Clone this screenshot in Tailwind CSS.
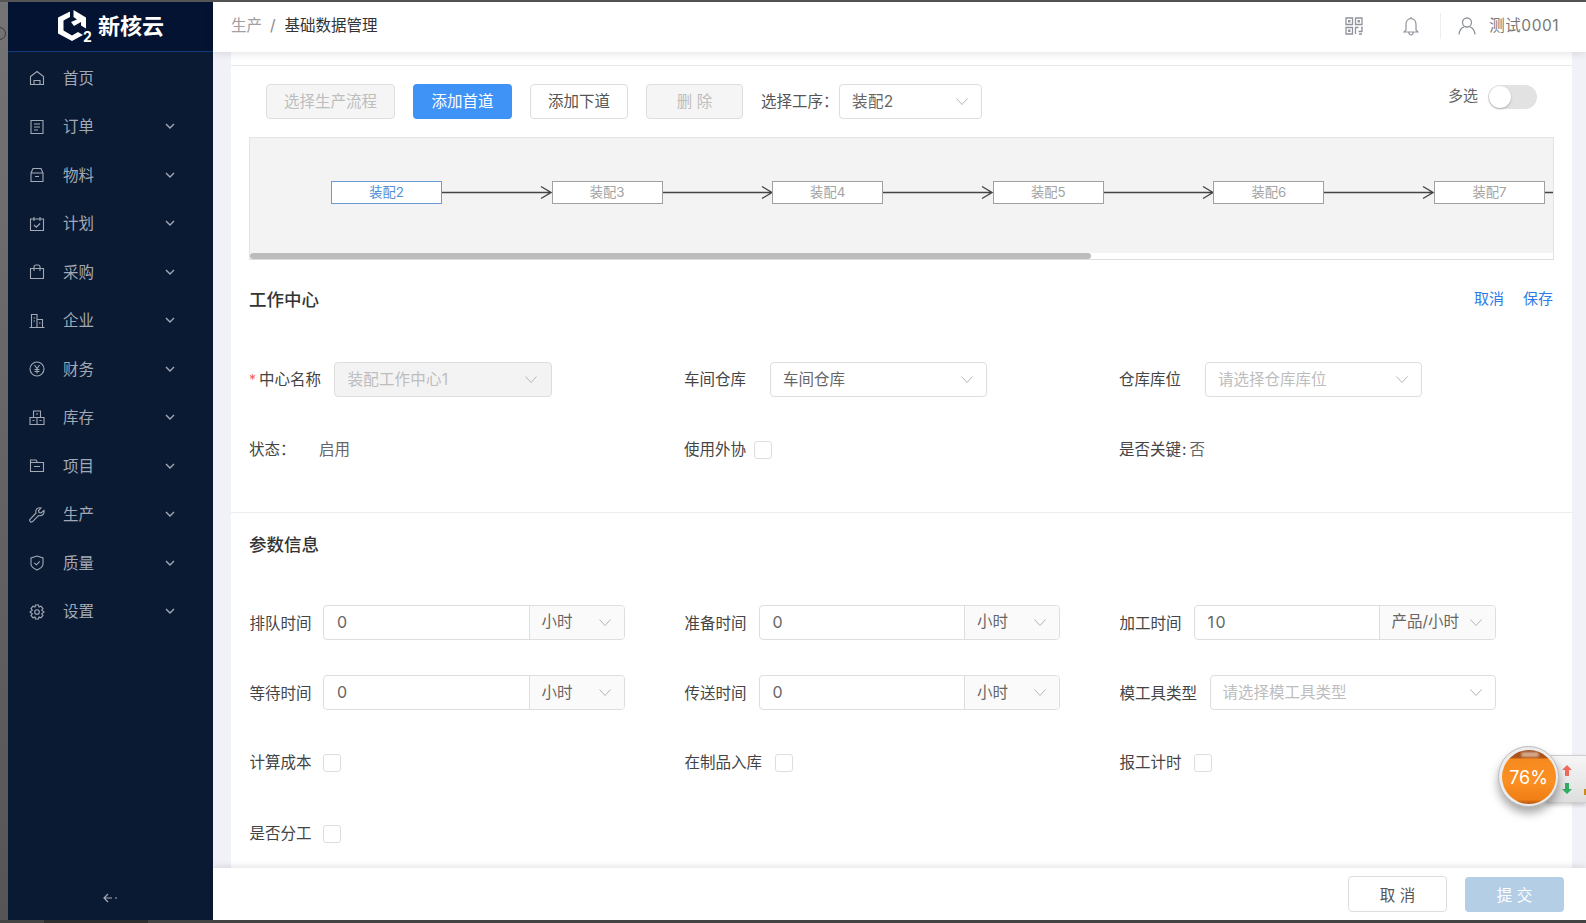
<!DOCTYPE html>
<html lang="zh-CN">
<head>
    <meta charset="UTF-8">
    <meta name="viewport" content="width=device-width, initial-scale=1.0">
    <title>基础数据管理</title>
    <script src="https://cdn.jsdelivr.net/npm/@tailwindcss/browser@4"></script>
</head>
<body class="w-[1586px] h-[923px] overflow-hidden relative bg-[#444] font-['Inter','Noto_Sans_CJK_SC',sans-serif] text-[15.5px] text-[#555]">
    <div class="h-[2px] bg-[#555]"></div>
    <div class="flex h-[918px]">
        <div class="w-[8px] bg-linear-to-b from-[#747474] to-[#555555] relative overflow-hidden">
            <div class="absolute -left-[7px] top-[25px] w-[13px] h-[13px] rounded-full border border-[#3c3c3c]"></div>
        </div>

        <!-- Sidebar -->
        <aside class="w-[205px] bg-[#0a1a33] flex flex-col text-[#a3a9b4]">
            <div class="h-[50px] bg-[#031331] border-b border-[#123a7c] flex items-center pl-[49px] shrink-0">
                <svg class="w-[30px] h-[31px] -mt-[3px]" viewBox="0 0 30 31" fill="#fff">
                    <path d="M13 1.5 V7 L6.5 10.5 V20.5 L15 25.5 L21 22 L26 25 L15 31 L1 23.5 V7.5 Z"/>
                    <path d="M16.5 0 L29 7.5 V18.5 L24 15.5 V12 L17 16 L14 12 L20 9.5 L16.5 7 Z"/>
                </svg>
                <span class="text-white font-bold text-[14px] -ml-[4px] mt-[21px] w-[10px] leading-none">2</span>
                <span class="text-white font-bold text-[22px] ml-[5px] -mt-[2px] leading-none">新核云</span>
            </div>
            <nav class="pt-[2px]">
                <div class="h-[48.5px] flex items-center pl-[21px]">
                    <svg class="w-[16px] h-[16px]" viewBox="0 0 16 16" fill="none" stroke="#a3a9b4" stroke-width="1.1"><path d="M1.5 6.5 L8 1.5 L14.5 6.5 V14.5 H1.5 Z"/><path d="M5 14.5 V10.5 H11 V14.5"/></svg>
                    <span class="ml-[18px]">首页</span>
                </div>
                <div class="h-[48.5px] flex items-center pl-[21px]">
                    <svg class="w-[16px] h-[16px]" viewBox="0 0 16 16" fill="none" stroke="#a3a9b4" stroke-width="1.1"><path d="M2 1.5 H14 V14.5 H2 Z M5 5 H11 M5 8 H11 M5 11 H9"/></svg>
                    <span class="ml-[18px]">订单</span>
                    <svg class="w-[10px] h-[7px] ml-[71px]" viewBox="0 0 10 7" fill="none" stroke="#a3a9b4" stroke-width="1.4"><path d="M1 1 L5 5 L9 1"/></svg>
                </div>
                <div class="h-[48.5px] flex items-center pl-[21px]">
                    <svg class="w-[16px] h-[16px]" viewBox="0 0 16 16" fill="none" stroke="#a3a9b4" stroke-width="1.1"><path d="M2 6 L4 1.5 H12 L14 6 V14.5 H2 Z M2 6 H14 M6 9.5 H10"/></svg>
                    <span class="ml-[18px]">物料</span>
                    <svg class="w-[10px] h-[7px] ml-[71px]" viewBox="0 0 10 7" fill="none" stroke="#a3a9b4" stroke-width="1.4"><path d="M1 1 L5 5 L9 1"/></svg>
                </div>
                <div class="h-[48.5px] flex items-center pl-[21px]">
                    <svg class="w-[16px] h-[16px]" viewBox="0 0 16 16" fill="none" stroke="#a3a9b4" stroke-width="1.1"><path d="M1.5 3 H14.5 V14.5 H1.5 Z M5 1 V5 M11 1 V5 M5 9 L7.3 11.2 L11 7.5"/></svg>
                    <span class="ml-[18px]">计划</span>
                    <svg class="w-[10px] h-[7px] ml-[71px]" viewBox="0 0 10 7" fill="none" stroke="#a3a9b4" stroke-width="1.4"><path d="M1 1 L5 5 L9 1"/></svg>
                </div>
                <div class="h-[48.5px] flex items-center pl-[21px]">
                    <svg class="w-[16px] h-[16px]" viewBox="0 0 16 16" fill="none" stroke="#a3a9b4" stroke-width="1.1"><path d="M1.5 4.5 H14.5 V14.5 H1.5 Z M5 7 V3 Q5 1 7 1 H9 Q11 1 11 3 V7"/></svg>
                    <span class="ml-[18px]">采购</span>
                    <svg class="w-[10px] h-[7px] ml-[71px]" viewBox="0 0 10 7" fill="none" stroke="#a3a9b4" stroke-width="1.4"><path d="M1 1 L5 5 L9 1"/></svg>
                </div>
                <div class="h-[48.5px] flex items-center pl-[21px]">
                    <svg class="w-[16px] h-[16px]" viewBox="0 0 16 16" fill="none" stroke="#a3a9b4" stroke-width="1.1"><path d="M0.5 14.5 H15.5 M2.5 14.5 V1.5 H8 V14.5 M8 6.5 H13.5 V14.5 M4.5 5 H6 M4.5 8 H6 M10 10 H11.5"/></svg>
                    <span class="ml-[18px]">企业</span>
                    <svg class="w-[10px] h-[7px] ml-[71px]" viewBox="0 0 10 7" fill="none" stroke="#a3a9b4" stroke-width="1.4"><path d="M1 1 L5 5 L9 1"/></svg>
                </div>
                <div class="h-[48.5px] flex items-center pl-[21px]">
                    <svg class="w-[16px] h-[16px]" viewBox="0 0 16 16" fill="none" stroke="#a3a9b4" stroke-width="1.1"><circle cx="8" cy="8" r="7"/><path d="M5.5 4 L8 7.5 L10.5 4 M8 7.5 V12.5 M5.5 8.5 H10.5 M5.5 10.5 H10.5"/></svg>
                    <span class="ml-[18px]">财务</span>
                    <svg class="w-[10px] h-[7px] ml-[71px]" viewBox="0 0 10 7" fill="none" stroke="#a3a9b4" stroke-width="1.4"><path d="M1 1 L5 5 L9 1"/></svg>
                </div>
                <div class="h-[48.5px] flex items-center pl-[21px]">
                    <svg class="w-[16px] h-[16px]" viewBox="0 0 16 16" fill="none" stroke="#a3a9b4" stroke-width="1.1"><path d="M4.5 1 H11.5 V7.5 H4.5 Z M1 7.5 H8 V14.5 H1 Z M8 7.5 H15 V14.5 H8 Z M7 4 H9 M3.5 10.5 H5.5 M10.5 10.5 H12.5"/></svg>
                    <span class="ml-[18px]">库存</span>
                    <svg class="w-[10px] h-[7px] ml-[71px]" viewBox="0 0 10 7" fill="none" stroke="#a3a9b4" stroke-width="1.4"><path d="M1 1 L5 5 L9 1"/></svg>
                </div>
                <div class="h-[48.5px] flex items-center pl-[21px]">
                    <svg class="w-[16px] h-[16px]" viewBox="0 0 16 16" fill="none" stroke="#a3a9b4" stroke-width="1.1"><path d="M1.5 2 H7 L8.5 4.5 H14.5 V13.5 H1.5 Z M1.5 4.5 H8.5 M5 8.5 H11"/></svg>
                    <span class="ml-[18px]">项目</span>
                    <svg class="w-[10px] h-[7px] ml-[71px]" viewBox="0 0 10 7" fill="none" stroke="#a3a9b4" stroke-width="1.4"><path d="M1 1 L5 5 L9 1"/></svg>
                </div>
                <div class="h-[48.5px] flex items-center pl-[21px]">
                    <svg class="w-[16px] h-[16px]" viewBox="0 0 16 16" fill="none" stroke="#a3a9b4" stroke-width="1.1"><path d="M15 3.5 L12 6 L10 5.5 L9.5 3.5 L12 1 Q9 0.2 7.5 2.2 Q6.3 4 7 6 L0.8 12.5 Q0.3 13.5 1.2 14.5 Q2.3 15.5 3.3 14.8 L9.5 8.5 Q12 9.2 13.8 7.8 Q15.5 6 15 3.5 Z"/></svg>
                    <span class="ml-[18px]">生产</span>
                    <svg class="w-[10px] h-[7px] ml-[71px]" viewBox="0 0 10 7" fill="none" stroke="#a3a9b4" stroke-width="1.4"><path d="M1 1 L5 5 L9 1"/></svg>
                </div>
                <div class="h-[48.5px] flex items-center pl-[21px]">
                    <svg class="w-[16px] h-[16px]" viewBox="0 0 16 16" fill="none" stroke="#a3a9b4" stroke-width="1.1"><path d="M8 1 L14 3 V9 Q14 12.5 8 15 Q2 12.5 2 9 V3 Z M5.3 7.8 L7.4 9.8 L10.8 6.3"/></svg>
                    <span class="ml-[18px]">质量</span>
                    <svg class="w-[10px] h-[7px] ml-[71px]" viewBox="0 0 10 7" fill="none" stroke="#a3a9b4" stroke-width="1.4"><path d="M1 1 L5 5 L9 1"/></svg>
                </div>
                <div class="h-[48.5px] flex items-center pl-[21px]">
                    <svg class="w-[16px] h-[16px]" viewBox="0 0 16 16" fill="none" stroke="#a3a9b4" stroke-width="1.1"><path d="M6.5 1 H9.5 L10 3 L12 2.2 L14 4.6 L12.7 6.2 L15 8 L12.7 9.8 L14 11.4 L12 13.8 L10 13 L9.5 15 H6.5 L6 13 L4 13.8 L2 11.4 L3.3 9.8 L1 8 L3.3 6.2 L2 4.6 L4 2.2 L6 3 Z"/><circle cx="8" cy="8" r="2.3"/></svg>
                    <span class="ml-[18px]">设置</span>
                    <svg class="w-[10px] h-[7px] ml-[71px]" viewBox="0 0 10 7" fill="none" stroke="#a3a9b4" stroke-width="1.4"><path d="M1 1 L5 5 L9 1"/></svg>
                </div>
            </nav>
            <div class="mt-auto h-[44px] flex items-center justify-center pb-[1px]">
                <svg class="w-[15px] h-[10px]" viewBox="0 0 15 10" fill="none" stroke="#a3a9b4" stroke-width="1.2"><path d="M5 1 L1 5 L5 9 M1 5 H9 M12 5 H14"/></svg>
            </div>
        </aside>

        <div class="flex-1 flex flex-col min-w-0">
            <!-- Header -->
            <header class="h-[50px] bg-white shadow-[0_2px_8px_rgba(0,0,0,0.1)] relative z-10 flex items-center pl-[18px] shrink-0">
                <span class="text-[#a0a0a0] -mt-[2px]">生产</span>
                <span class="text-[#888] ml-[8px] -mt-[2px]">/</span>
                <span class="text-[#333] ml-[9px] -mt-[2px]">基础数据管理</span>
                <svg class="w-[18px] h-[18px] ml-auto -mt-[3px]" viewBox="0 0 18 18" fill="none" stroke="#8f939b" stroke-width="1.3"><path d="M1 1 H7.5 V7.5 H1 Z M10.5 1 H17 V7.5 H10.5 Z M1 10.5 H7.5 V17 H1 Z M3.7 3.7 H4.8 V4.8 H3.7 Z M13.2 3.7 H14.3 V4.8 H13.2 Z M3.7 13.2 H4.8 V14.3 H3.7 Z M10.5 17 V10.5 H13.5 M16 10.5 H17 V14.5 H13.5 M14 17 H17"/></svg>
                <svg class="w-[16px] h-[20px] ml-[40px] -mt-[3px]" viewBox="0 0 16 20" fill="none" stroke="#8f939b" stroke-width="1.2"><path d="M8 1 V2.5 Q3 3 3 8.5 V14 L1 16 H15 L13 14 V8.5 Q13 3 8 2.5 M5.8 16.5 Q6 19 8 19 Q10 19 10.2 16.5"/></svg>
                <div class="w-[1px] h-[26px] bg-[#eeeeee] ml-[21px] -mt-[2px]"></div>
                <svg class="w-[18px] h-[18px] ml-[17px] -mt-[3px]" viewBox="0 0 18 18" fill="none" stroke="#8f939b" stroke-width="1.3"><circle cx="9" cy="5.5" r="4.5"/><path d="M1 17.5 Q1.5 11.5 6 10 M17 17.5 Q16.5 11.5 12 10"/></svg>
                <span class="ml-[13px] mr-[27px] text-[#777] tracking-[0.5px] -mt-[2px]">测试0001</span>
            </header>

            <!-- Main -->
            <main class="flex-1 min-h-0 bg-[#f0f2f7] pl-[18px] pr-[14px] overflow-hidden">
                <div class="bg-white h-full pt-[13px]">
                    <div class="border-t border-[#e8e8e8] pt-[18px] relative">
                        <div class="flex items-center h-[35px] pl-[35px]">
                            <div class="w-[129px] h-[35px] flex items-center justify-center rounded-[4px] border border-[#dedede] bg-[#f5f5f5] text-[#bdbdbd]">选择生产流程</div>
                            <div class="w-[99px] h-[35px] ml-[18px] flex items-center justify-center rounded-[4px] bg-[#3f93f7] text-white">添加首道</div>
                            <div class="w-[98px] h-[35px] ml-[18px] flex items-center justify-center rounded-[4px] border border-[#dedede] bg-white text-[#555]">添加下道</div>
                            <div class="w-[97px] h-[35px] ml-[18px] flex items-center justify-center rounded-[4px] border border-[#dedede] bg-[#f5f5f5] text-[#bdbdbd]">删 除</div>
                            <span class="ml-[18px] w-[78px] text-[#555]">选择工序：</span>
                            <div class="w-[143px] h-[35px] flex items-center justify-between rounded-[4px] border border-[#dedede] pl-[12px] pr-[13px]">
                                <span class="text-[#666] tracking-[0.4px]">装配2</span>
                                <svg class="w-[12px] h-[7px]" viewBox="0 0 12 7" fill="none" stroke="#b5b5b5" stroke-width="1"><path d="M0.5 0.5 L6 6.5 L11.5 0.5"/></svg>
                            </div>
                            <span class="absolute left-[1217px] top-[18px] text-[#666] text-[15px] leading-[24px]">多选</span>
                            <div class="absolute left-[1257px] top-[19px] w-[49px] h-[24px] rounded-full bg-[#e2e2e2]">
                                <div class="w-[22px] h-[22px] m-[1px] rounded-full bg-white shadow-[0_1px_2px_rgba(0,0,0,0.25)]"></div>
                            </div>
                        </div>

                        <!-- Flow diagram -->
                        <div class="ml-[17.5px] mt-[18px] w-[1305.5px] h-[123px] bg-[#f3f3f3] border border-[#e3e3e3] border-b-[#dddddd] relative overflow-hidden">
                            <div class="flex pl-[81.5px] pt-[43px] text-[13.3px] leading-[21px] text-center">
                                <div class="w-[111px] h-[23px] shrink-0 bg-white border border-[#6a9bd4] text-[#4f8fd8]">装配2</div>
                                <svg class="w-[109.6px] h-[23px] shrink-0" viewBox="0 0 109.6 23" fill="none" stroke="#444" stroke-width="1.3"><path d="M0 11.5 H109 M99 5.5 L109 11.5 L99 17.5"/></svg>
                                <div class="w-[111px] h-[23px] shrink-0 bg-white border border-[#a0a0a0] text-[#a3a3a3]">装配3</div>
                                <svg class="w-[109.6px] h-[23px] shrink-0" viewBox="0 0 109.6 23" fill="none" stroke="#444" stroke-width="1.3"><path d="M0 11.5 H109 M99 5.5 L109 11.5 L99 17.5"/></svg>
                                <div class="w-[111px] h-[23px] shrink-0 bg-white border border-[#a0a0a0] text-[#a3a3a3]">装配4</div>
                                <svg class="w-[109.6px] h-[23px] shrink-0" viewBox="0 0 109.6 23" fill="none" stroke="#444" stroke-width="1.3"><path d="M0 11.5 H109 M99 5.5 L109 11.5 L99 17.5"/></svg>
                                <div class="w-[111px] h-[23px] shrink-0 bg-white border border-[#a0a0a0] text-[#a3a3a3]">装配5</div>
                                <svg class="w-[109.6px] h-[23px] shrink-0" viewBox="0 0 109.6 23" fill="none" stroke="#444" stroke-width="1.3"><path d="M0 11.5 H109 M99 5.5 L109 11.5 L99 17.5"/></svg>
                                <div class="w-[111px] h-[23px] shrink-0 bg-white border border-[#a0a0a0] text-[#a3a3a3]">装配6</div>
                                <svg class="w-[109.6px] h-[23px] shrink-0" viewBox="0 0 109.6 23" fill="none" stroke="#444" stroke-width="1.3"><path d="M0 11.5 H109 M99 5.5 L109 11.5 L99 17.5"/></svg>
                                <div class="w-[111px] h-[23px] shrink-0 bg-white border border-[#a0a0a0] text-[#a3a3a3]">装配7</div>
                                <svg class="w-[109.6px] h-[23px] shrink-0" viewBox="0 0 109.6 23" fill="none" stroke="#444" stroke-width="1.3"><path d="M0 11.5 H109 M99 5.5 L109 11.5 L99 17.5"/></svg>
                            </div>
                            <div class="absolute left-0 right-0 bottom-0 h-[6px] bg-white">
                                <div class="w-[841px] h-full rounded-full bg-[#bcbcbc]"></div>
                            </div>
                        </div>

                        <!-- Work center -->
                        <div class="flex items-center justify-between h-[24px] mt-[28px] pl-[18px] pr-[19px]">
                            <h2 class="text-[17.5px] font-medium text-[#333]">工作中心</h2>
                            <div class="flex gap-[19px] text-[15px] text-[#2f7be5] -mt-[2px]">
                                <span>取消</span>
                                <span>保存</span>
                            </div>
                        </div>

                        <div class="grid grid-cols-[435px_435px_1fr] auto-rows-[35px] gap-y-[35px] mt-[50px] pl-[18px]">
                            <div class="flex items-center">
                                <span class="w-[10px] text-[#f0605a] text-[14px]">*</span>
                                <span class="w-[74.5px] text-[#444]">中心名称</span>
                                <div class="w-[218px] h-[35px] flex items-center justify-between rounded-[4px] border border-[#dedede] bg-[#f3f3f3] pl-[13px] pr-[14px]">
                                    <span class="text-[#bdbdbd] tracking-[0.2px]">装配工作中心1</span>
                                    <svg class="w-[12px] h-[7px]" viewBox="0 0 12 7" fill="none" stroke="#b5b5b5" stroke-width="1"><path d="M0.5 0.5 L6 6.5 L11.5 0.5"/></svg>
                                </div>
                            </div>
                            <div class="flex items-center">
                                <span class="w-[86px] text-[#444]">车间仓库</span>
                                <div class="w-[217px] h-[35px] flex items-center justify-between rounded-[4px] border border-[#dedede] pl-[12px] pr-[13px]">
                                    <span class="text-[#666]">车间仓库</span>
                                    <svg class="w-[12px] h-[7px]" viewBox="0 0 12 7" fill="none" stroke="#b5b5b5" stroke-width="1"><path d="M0.5 0.5 L6 6.5 L11.5 0.5"/></svg>
                                </div>
                            </div>
                            <div class="flex items-center">
                                <span class="w-[86px] text-[#444]">仓库库位</span>
                                <div class="w-[217px] h-[35px] flex items-center justify-between rounded-[4px] border border-[#dedede] pl-[12px] pr-[13px]">
                                    <span class="text-[#bdbdbd]">请选择仓库库位</span>
                                    <svg class="w-[12px] h-[7px]" viewBox="0 0 12 7" fill="none" stroke="#b5b5b5" stroke-width="1"><path d="M0.5 0.5 L6 6.5 L11.5 0.5"/></svg>
                                </div>
                            </div>
                            <div class="flex items-center">
                                <span class="w-[70px] text-[#444]">状态：</span>
                                <span class="text-[#666]">启用</span>
                            </div>
                            <div class="flex items-center">
                                <span class="w-[70px] text-[#444]">使用外协</span>
                                <div class="w-[18px] h-[18px] rounded-[3px] border border-[#dedede] bg-white"></div>
                            </div>
                            <div class="flex items-center text-[#444]">是否关键<span class="ml-[1px] mr-[3px]">:</span><span class="text-[#666]">否</span></div>
                        </div>
                    </div>

                    <div class="border-t border-[#ececec] mt-[45px]"></div>

                    <!-- Params -->
                    <h2 class="text-[17.5px] font-medium text-[#333] h-[24px] leading-[24px] mt-[20px] pl-[18px]">参数信息</h2>
                    <div class="grid grid-cols-[435px_435px_1fr] auto-rows-[35px] gap-y-[35.5px] mt-[47.5px] pl-[18.5px] text-[#444]">
                        <div class="flex items-center">
                            <span class="w-[73.5px] pt-[3px]">排队时间</span>
                            <div class="w-[302px] h-[35px] flex rounded-[4px] border border-[#dedede] overflow-hidden">
                                <span class="w-[204.5px] pl-[13px] leading-[33px] text-[#666] text-[16px]">0</span>
                                <div class="flex-1 flex items-center justify-between border-l border-[#dedede] bg-[#fafafa] pl-[12px] pr-[13px]">
                                    <span class="text-[#666]">小时</span>
                                    <svg class="w-[12px] h-[7px]" viewBox="0 0 12 7" fill="none" stroke="#b5b5b5" stroke-width="1"><path d="M0.5 0.5 L6 6.5 L11.5 0.5"/></svg>
                                </div>
                            </div>
                        </div>
                        <div class="flex items-center">
                            <span class="w-[74px] pt-[3px]">准备时间</span>
                            <div class="w-[301.5px] h-[35px] flex rounded-[4px] border border-[#dedede] overflow-hidden">
                                <span class="w-[204.5px] pl-[13px] leading-[33px] text-[#666] text-[16px]">0</span>
                                <div class="flex-1 flex items-center justify-between border-l border-[#dedede] bg-[#fafafa] pl-[12px] pr-[13px]">
                                    <span class="text-[#666]">小时</span>
                                    <svg class="w-[12px] h-[7px]" viewBox="0 0 12 7" fill="none" stroke="#b5b5b5" stroke-width="1"><path d="M0.5 0.5 L6 6.5 L11.5 0.5"/></svg>
                                </div>
                            </div>
                        </div>
                        <div class="flex items-center">
                            <span class="w-[74px] pt-[3px]">加工时间</span>
                            <div class="w-[302px] h-[35px] flex rounded-[4px] border border-[#dedede] overflow-hidden">
                                <span class="w-[184px] pl-[13px] leading-[33px] text-[#666] text-[16px] tracking-[1.5px]">10</span>
                                <div class="flex-1 flex items-center justify-between border-l border-[#dedede] bg-[#fafafa] pl-[12px] pr-[13px]">
                                    <span class="text-[#666]">产品/小时</span>
                                    <svg class="w-[12px] h-[7px]" viewBox="0 0 12 7" fill="none" stroke="#b5b5b5" stroke-width="1"><path d="M0.5 0.5 L6 6.5 L11.5 0.5"/></svg>
                                </div>
                            </div>
                        </div>
                        <div class="flex items-center">
                            <span class="w-[73.5px] pt-[2px]">等待时间</span>
                            <div class="w-[302px] h-[35px] flex rounded-[4px] border border-[#dedede] overflow-hidden">
                                <span class="w-[204.5px] pl-[13px] leading-[33px] text-[#666] text-[16px]">0</span>
                                <div class="flex-1 flex items-center justify-between border-l border-[#dedede] bg-[#fafafa] pl-[12px] pr-[13px]">
                                    <span class="text-[#666]">小时</span>
                                    <svg class="w-[12px] h-[7px]" viewBox="0 0 12 7" fill="none" stroke="#b5b5b5" stroke-width="1"><path d="M0.5 0.5 L6 6.5 L11.5 0.5"/></svg>
                                </div>
                            </div>
                        </div>
                        <div class="flex items-center">
                            <span class="w-[74px] pt-[2px]">传送时间</span>
                            <div class="w-[301.5px] h-[35px] flex rounded-[4px] border border-[#dedede] overflow-hidden">
                                <span class="w-[204.5px] pl-[13px] leading-[33px] text-[#666] text-[16px]">0</span>
                                <div class="flex-1 flex items-center justify-between border-l border-[#dedede] bg-[#fafafa] pl-[12px] pr-[13px]">
                                    <span class="text-[#666]">小时</span>
                                    <svg class="w-[12px] h-[7px]" viewBox="0 0 12 7" fill="none" stroke="#b5b5b5" stroke-width="1"><path d="M0.5 0.5 L6 6.5 L11.5 0.5"/></svg>
                                </div>
                            </div>
                        </div>
                        <div class="flex items-center">
                            <span class="w-[90px] pt-[2px]">模工具类型</span>
                            <div class="w-[286px] h-[35px] flex items-center justify-between rounded-[4px] border border-[#dedede] pl-[12px] pr-[13px]">
                                <span class="text-[#bdbdbd]">请选择模工具类型</span>
                                <svg class="w-[12px] h-[7px]" viewBox="0 0 12 7" fill="none" stroke="#b5b5b5" stroke-width="1"><path d="M0.5 0.5 L6 6.5 L11.5 0.5"/></svg>
                            </div>
                        </div>
                        <div class="flex items-center">
                            <span class="w-[73px]">计算成本</span>
                            <div class="w-[18px] h-[18px] rounded-[3px] border border-[#dedede] bg-white"></div>
                        </div>
                        <div class="flex items-center">
                            <span class="w-[90px]">在制品入库</span>
                            <div class="w-[18px] h-[18px] rounded-[3px] border border-[#dedede] bg-white"></div>
                        </div>
                        <div class="flex items-center">
                            <span class="w-[74px]">报工计时</span>
                            <div class="w-[18px] h-[18px] rounded-[3px] border border-[#dedede] bg-white"></div>
                        </div>
                        <div class="flex items-center">
                            <span class="w-[73px]">是否分工</span>
                            <div class="w-[18px] h-[18px] rounded-[3px] border border-[#dedede] bg-white"></div>
                        </div>
                    </div>
                </div>
            </main>

            <!-- Footer -->
            <footer class="h-[52px] bg-white shadow-[0_-2px_6px_rgba(0,0,0,0.1)] relative z-10 flex items-center justify-end pr-[22px] gap-[18px] shrink-0">
                <div class="w-[99px] h-[36px] flex items-center justify-center rounded-[4px] border border-[#dedede] text-[#555] pt-[3px]">取 消</div>
                <div class="w-[99px] h-[35px] flex items-center justify-center rounded-[4px] bg-[#b3cee5] text-white pt-[3px]">提 交</div>
            </footer>
        </div>
    </div>
    <div class="h-[3px] bg-[#444]">
        <div class="ml-[44px] w-[104px] h-full bg-[#2f2f2f]"></div>
    </div>

    <!-- Floating speed widget -->
    <div class="absolute left-[1545px] top-[755px] w-[41px] h-[48px] rounded-l-[4px] bg-linear-to-b from-[#f6f6f6] to-[#dedede] border-y border-[#cfcfcf] shadow-[0_2px_4px_rgba(0,0,0,0.2)] z-20">
        <svg class="absolute left-[17px] top-[9px] w-[10px] h-[12px]" viewBox="0 0 10 12" fill="#ef6a5c"><path d="M5 0 L10 5 H7 V11 H3 V5 H0 Z"/></svg>
        <svg class="absolute left-[17px] top-[26px] w-[10px] h-[12px]" viewBox="0 0 10 12" fill="#2fae62"><path d="M5 12 L10 7 H7 V1 H3 V7 H0 Z"/></svg>
        <div class="absolute right-0 top-[33px] w-[2px] h-[6px] bg-[#c98a1c]"></div>
    </div>
    <div class="absolute left-[1498px] top-[746px] w-[61px] h-[61px] rounded-full bg-[#ececec] border border-[#bdbdbd] shadow-[0_6px_10px_rgba(0,0,0,0.35)] flex items-center justify-center z-30">
        <div class="w-[54px] h-[54px] rounded-full relative overflow-hidden bg-[linear-gradient(to_bottom,#9c4a18_0%,#b0551c_14%,#f68a1e_17%,#fb8f22_60%,#f07e16_92%,#b0520f_100%)] flex items-center justify-center text-white text-[18px] pt-[1px]">
            <div class="absolute left-[19px] top-[2px] w-[18px] h-[5px] rounded-full bg-white/50 blur-[1px]"></div>
            76%
        </div>
    </div>
</body>
</html>
